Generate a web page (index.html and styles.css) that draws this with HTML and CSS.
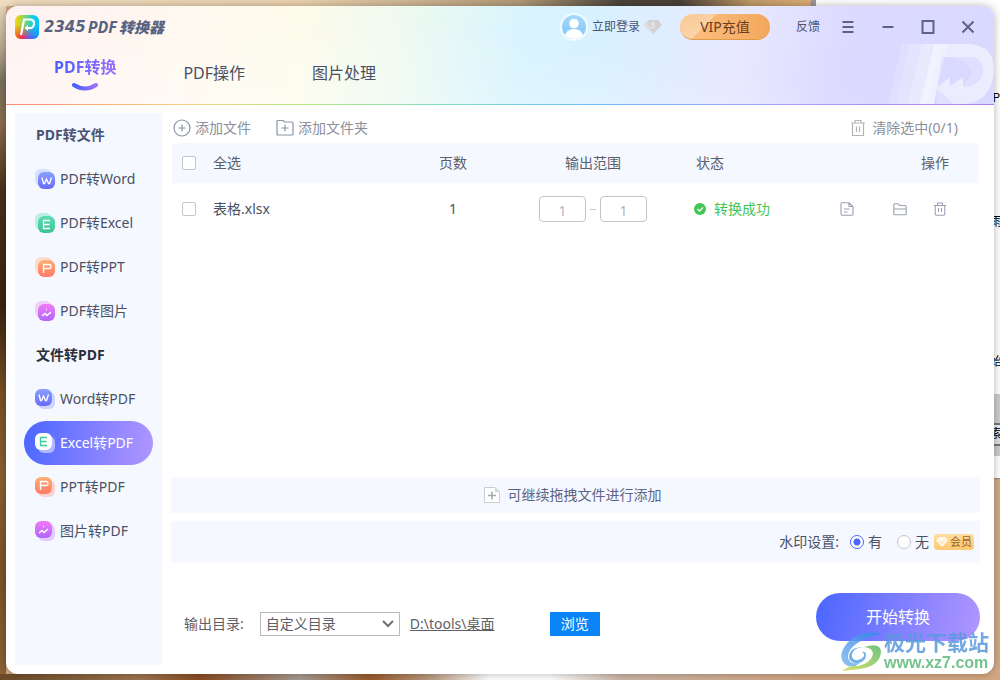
FILE: index.html
```html
<!DOCTYPE html>
<html lang="zh-CN">
<head>
<meta charset="utf-8">
<title>2345PDF转换器</title>
<link rel="stylesheet" href="styles.css">
</head>
<body>
<svg class="defs" width="0" height="0" aria-hidden="true">
  <defs>
    <linearGradient id="g-w" x1="0" y1="0" x2="0" y2="1"><stop offset="0" stop-color="#8aa0ff"/><stop offset="1" stop-color="#6a6cf8"/></linearGradient>
    <linearGradient id="g-e" x1="0" y1="0" x2="0" y2="1"><stop offset="0" stop-color="#5cdcb4"/><stop offset="1" stop-color="#3cc493"/></linearGradient>
    <linearGradient id="g-p" x1="0" y1="0" x2="0" y2="1"><stop offset="0" stop-color="#ffae75"/><stop offset="1" stop-color="#ff7a68"/></linearGradient>
    <linearGradient id="g-i" x1="0" y1="0" x2="0" y2="1"><stop offset="0" stop-color="#f07cf5"/><stop offset="1" stop-color="#b264fb"/></linearGradient>
    <linearGradient id="g-brand" x1="0" y1="0" x2="1" y2="0"><stop offset="0" stop-color="#4460ff"/><stop offset="1" stop-color="#a070ff"/></linearGradient>
    <linearGradient id="g-sky" x1="0" y1="0" x2="0" y2="1"><stop offset="0" stop-color="#a5d8fb"/><stop offset="1" stop-color="#7fc4f7"/></linearGradient>
    <linearGradient id="g-blue" x1="1" y1="0" x2="0" y2="1"><stop offset="0" stop-color="#2f86ea"/><stop offset="1" stop-color="#7fb8ec"/></linearGradient>
    <linearGradient id="g-green" x1="1" y1="0" x2="0" y2="1"><stop offset="0" stop-color="#58b96a"/><stop offset="1" stop-color="#d3dc52"/></linearGradient>
    <symbol id="m-w" viewBox="0 0 17 17"><path d="M4 5.500l1.500 6h1L8.500 7l2 4.500h1l2-6"/></symbol>
    <symbol id="m-e" viewBox="0 0 17 17"><path d="M12 4.500H5.500v8H12M5.500 8.500H11.500"/></symbol>
    <symbol id="m-p" viewBox="0 0 17 17"><path d="M5.500 13V4.500H11.500Q13 4.500 13 6.500T11.500 8.500H5.500"/></symbol>
    <symbol id="m-i" viewBox="0 0 17 17"><path d="M4 12l3-2.500 2 2L13 8M8 5.500h1"/></symbol>
  </defs>
</svg>

<div class="desktop">
  <div class="backdrop" aria-hidden="true">
    <div class="doc">
      <div class="doc-tools"></div>
      <span class="frag frag-a">P</span>
      <span class="frag frag-b">雨</span>
      <span class="frag frag-c">始</span>
      <span class="frag frag-d">索</span>
    </div>
  </div>

  <div class="app">
    <header class="header">
      <svg class="mark" width="106" height="60" viewBox="0 0 106 60" aria-hidden="true">
        <path d="M14 0H44L32 60H0z" fill="#fff" opacity=".16"/>
        <path d="M22 0H52L38 60H8z" fill="#fff" opacity=".16"/>
        <path d="M34 0H60L46 60H20z" fill="#fff" opacity=".22"/>
        <path d="M60 13H82Q95 14 95 27Q93 43 80 43H74L84 30Q84 18 60 13z" fill="#fff" opacity=".2"/>
        <path fill-rule="evenodd" d="M46 0H82Q106 2 106 26Q104 58 76 60H66L48 44L62 33V42L75 33V43Q93 43 95 27Q94 13 82 13H54L46 60H32z" fill="#fff" opacity=".5"/>
        <path d="M48 44L66 60H50z" fill="#fff" opacity=".2"/>
      </svg>
      <div class="titlebar">
        <svg width="24" height="24" viewBox="0 0 24 24" aria-hidden="true">
          <defs>
            <linearGradient id="l1" x1="0" y1="0" x2="1" y2="0"><stop offset="0" stop-color="#ffd400"/><stop offset=".45" stop-color="#6cd67a"/><stop offset=".75" stop-color="#12cfe6"/><stop offset="1" stop-color="#00c4ff"/></linearGradient>
            <linearGradient id="l2" x1="0" y1="0" x2="1" y2="0"><stop offset="0" stop-color="#ff5a1a"/><stop offset=".3" stop-color="#f02c5c"/><stop offset=".6" stop-color="#6a58e8"/><stop offset="1" stop-color="#00a2ff"/></linearGradient>
            <linearGradient id="l3" x1="0" y1="0" x2="0" y2="1"><stop offset=".4" stop-color="#fff" stop-opacity="0"/><stop offset=".95" stop-color="#fff"/></linearGradient>
            <mask id="lm"><rect width="24" height="24" fill="url(#l3)"/></mask>
          </defs>
          <rect width="24" height="24" rx="6" fill="url(#l1)"/>
          <rect width="24" height="24" rx="6" fill="url(#l2)" mask="url(#lm)"/>
          <path d="M6 20L9 4.500H14.500Q19.500 4.500 19 9T14 13H12.500" fill="none" stroke="#fff" stroke-width="2.200"/>
          <path d="M13 10v6L9.500 13z" fill="#fff"/>
        </svg>
        <h1 class="brand"><span class="brand-num">2345</span><span class="brand-pdf">PDF</span><span class="brand-cn">转换器</span></h1>
        <button class="login" type="button">
          <svg width="28" height="28" viewBox="0 0 28 28" aria-hidden="true"><circle cx="14" cy="14" r="14" fill="#f2fbff"/><circle cx="14" cy="14" r="12" fill="url(#g-sky)"/><circle cx="14" cy="10.500" r="4.800" fill="#fff"/><path d="M5 22Q7 16 14 16T23 22Q19 26 14 26T5 22z" fill="#fff"/></svg>
          <span>立即登录</span>
          <svg width="18" height="14" viewBox="0 0 18 14" aria-hidden="true"><path d="M4 0H14L18 5L9 14L0 5z" fill="#d2d0d2"/><path d="M4 0L5 5L9 14L0 5z" fill="#dedcdc"/><path d="M11 3H8Q6.500 4 8 5H10Q11.500 6.500 10 7.500H7" fill="none" stroke="#eee"/></svg>
        </button>
        <button class="vip" type="button">VIP充值</button>
        <button class="feedback" type="button">反馈</button>
        <div class="window-buttons">
          <button type="button" aria-label="菜单"><svg width="14" height="14" viewBox="0 0 14 14"><path d="M1.500 2H12.500M1.500 7H12.500M1.500 12H12.500"/></svg></button>
          <button type="button" aria-label="最小化"><svg width="14" height="14" viewBox="0 0 14 14"><path d="M1.500 7H12.500"/></svg></button>
          <button type="button" aria-label="最大化"><svg width="14" height="14" viewBox="0 0 14 14"><path d="M1.500 1H12.500V13H1.500z"/></svg></button>
          <button type="button" aria-label="关闭"><svg width="14" height="14" viewBox="0 0 14 14"><path d="M1.500 1.500L12.500 12.500M12.500 1.500L1.500 12.500"/></svg></button>
        </div>
      </div>
      <nav class="tabs">
        <a class="tab tab-active" href="#convert"><span>PDF转换</span><svg width="26" height="8" viewBox="0 0 26 8" aria-hidden="true"><path d="M2 2Q13 9 24 2" fill="none" stroke="url(#g-brand)" stroke-width="4" stroke-linecap="round"/></svg></a>
        <a class="tab" href="#operate">PDF操作</a>
        <a class="tab" href="#image">图片处理</a>
      </nav>
    </header>

    <div class="body">
      <nav class="sidebar">
        <h2 class="group">PDF转文件</h2>
        <a class="item" href="#pdf-word"><svg class="ic" viewBox="0 0 20 20"><rect width="17" height="17" rx="6" fill="#d3dfff"/><rect x="3" y="3" width="17" height="17" rx="6" fill="url(#g-w)"/><use href="#m-w" x="3" y="3" width="17" height="17"/></svg>PDF转Word</a>
        <a class="item" href="#pdf-excel"><svg class="ic" viewBox="0 0 20 20"><rect width="17" height="17" rx="6" fill="#bdeee1"/><rect x="3" y="3" width="17" height="17" rx="6" fill="url(#g-e)"/><use href="#m-e" x="3" y="3" width="17" height="17"/></svg>PDF转Excel</a>
        <a class="item" href="#pdf-ppt"><svg class="ic" viewBox="0 0 20 20"><rect width="17" height="17" rx="6" fill="#fbdccf"/><rect x="3" y="3" width="17" height="17" rx="6" fill="url(#g-p)"/><use href="#m-p" x="3" y="3" width="17" height="17"/></svg>PDF转PPT</a>
        <a class="item" href="#pdf-image"><svg class="ic" viewBox="0 0 20 20"><rect width="17" height="17" rx="6" fill="#f1cffb"/><rect x="3" y="3" width="17" height="17" rx="6" fill="url(#g-i)"/><use href="#m-i" x="3" y="3" width="17" height="17"/></svg>PDF转图片</a>
        <h2 class="group group-current">文件转PDF</h2>
        <a class="item" href="#word-pdf"><svg class="ic" viewBox="0 0 20 20"><rect x="3" y="3" width="17" height="17" rx="6" fill="#cfd3ff"/><rect width="17" height="17" rx="6" fill="url(#g-w)"/><use href="#m-w" width="17" height="17"/></svg>Word转PDF</a>
        <a class="item item-active" href="#excel-pdf" aria-current="page"><svg class="ic" viewBox="0 0 20 20"><rect x="3" y="3" width="17" height="17" rx="6" fill="#fff" opacity=".5"/><rect width="17" height="17" rx="6" fill="#fff"/><use href="#m-e" width="17" height="17"/></svg>Excel转PDF</a>
        <a class="item" href="#ppt-pdf"><svg class="ic" viewBox="0 0 20 20"><rect x="3" y="3" width="17" height="17" rx="6" fill="#fad2cc"/><rect width="17" height="17" rx="6" fill="url(#g-p)"/><use href="#m-p" width="17" height="17"/></svg>PPT转PDF</a>
        <a class="item" href="#image-pdf"><svg class="ic" viewBox="0 0 20 20"><rect x="3" y="3" width="17" height="17" rx="6" fill="#e2cbfc"/><rect width="17" height="17" rx="6" fill="url(#g-i)"/><use href="#m-i" width="17" height="17"/></svg>图片转PDF</a>
      </nav>

      <main class="main">
        <div class="toolbar">
          <button class="tool" type="button"><svg width="18" height="18" viewBox="0 0 18 18"><circle cx="9" cy="9" r="8"/><path d="M5.500 9h7M9 5.500v7"/></svg>添加文件</button>
          <button class="tool" type="button"><svg width="18" height="18" viewBox="0 0 18 18"><path d="M1 2.500Q1 1.500 2 1.500H7L8.500 3H16Q17 3 17 4V15Q17 16 16 16H2Q1 16 1 15zM5.500 9h7M9 5.500v7"/></svg>添加文件夹</button>
          <button class="tool tool-clear" type="button"><svg width="16" height="18" viewBox="0 0 16 18"><path d="M1 4H15M5 4V1.500H11V4M2.500 4V16.500H13.500V4M6.500 7.500V13M9.500 7.500V13"/></svg>清除选中(0/1)</button>
        </div>

        <table class="files">
          <colgroup><col class="c-check"><col><col class="c-pages"><col class="c-range"><col class="c-status"><col class="c-ops"></colgroup>
          <thead>
            <tr><th><input id="all" class="tick" type="checkbox"></th><th class="left"><label for="all">全选</label></th><th>页数</th><th>输出范围</th><th class="status">状态</th><th class="ops-head">操作</th></tr>
          </thead>
          <tbody>
            <tr>
              <td><input id="f1" class="tick" type="checkbox"></td>
              <td class="left"><label for="f1">表格.xlsx</label></td>
              <td>1</td>
              <td><div class="range"><input type="text" value="1" aria-label="起始页"><span class="dash"></span><input type="text" value="1" aria-label="结束页"></div></td>
              <td class="status"><div class="done"><svg width="12" height="12" viewBox="0 0 12 12" aria-hidden="true"><circle cx="6" cy="6" r="6" fill="#41c653"/><path d="M3.500 6l2 2 3.500-3.500" fill="none" stroke="#fff" stroke-width="1.300"/></svg>转换成功</div></td>
              <td><div class="ops">
                <button type="button" aria-label="打开文件"><svg width="14" height="14" viewBox="0 0 14 14"><path d="M9 .8H2Q1 .8 1 2V12Q1 13.200 2 13.200H12Q13 13.200 13 12V4.500zM9 1V4.500H13M4 7h5.500M4 10h3.500"/></svg></button>
                <button type="button" aria-label="打开文件夹"><svg width="14" height="14" viewBox="0 0 14 14"><path d="M.8 3Q.8 1.800 2 1.800H5L6.500 3.500H12Q13.200 3.500 13.200 5V11.500Q13.200 12.800 12 12.800H2Q.8 12.800 .8 11.500zM1 7H13"/></svg></button>
                <button type="button" aria-label="删除"><svg width="14" height="14" viewBox="0 0 14 14"><path d="M1 3.500H13M4.500 3.500V1H9.500V3.500M2.200 3.500V12Q2.200 13.200 3.400 13.200H10.600Q11.800 13.200 11.800 12V3.500M5.500 6v4M8.500 6v4"/></svg></button>
              </div></td>
            </tr>
          </tbody>
        </table>

        <div class="dropbar">
          <svg width="16" height="16" viewBox="0 0 16 16" aria-hidden="true"><path d="M.5 .5H11L15.500 5V15.500H.5z" fill="#fff" stroke="#c9ccd2"/><path d="M11 .5V5H15.500z" fill="#d3d5d9"/><path d="M4 8.500H12M8 4.500V12.500" stroke="#a3a7b0" stroke-width="1.500"/></svg>
          可继续拖拽文件进行添加
        </div>

        <div class="watermark-bar" role="radiogroup" aria-labelledby="wm">
          <span id="wm">水印设置:</span>
          <label class="choice choice-yes"><input type="radio" name="wm" checked>有</label>
          <label class="choice"><input type="radio" name="wm">无</label>
          <span class="member"><svg width="12" height="10" viewBox="0 0 12 10" aria-hidden="true"><path d="M3 0H9L12 3.500L6 10L0 3.500z" fill="#fff8e6"/><path d="M3.500 3.500L6 6.500L8.500 3.500" fill="none" stroke="#fdd9a0"/></svg>会员</span>
        </div>

        <footer class="footer">
          <div class="output">
            <label for="dir">输出目录:</label>
            <div class="select-box"><select id="dir"><option>自定义目录</option></select><svg width="12" height="8" viewBox="0 0 12 8" aria-hidden="true"><path d="M1 1L6 6L11 1" fill="none" stroke="#707070" stroke-width="2"/></svg></div>
            <a class="path" href="#dir">D:\tools\桌面</a>
            <button class="browse" type="button">浏览</button>
          </div>
          <button class="start" type="button">开始转换</button>
        </footer>
      </main>
    </div>
  </div>

  <div class="stamp">
    <svg width="42" height="40" viewBox="0 0 42 40" aria-hidden="true">
      <path d="M42 1Q16-2 5 14Q-3 26 6 33Q13 37 20 31Q8 33 8 24Q9 10 42 1z" fill="url(#g-blue)"/>
      <path d="M24 15Q11 16 12 25Q14 30 21 27Q27 23 22 20Q26 19 26 23Q26 29 19 31Q10 32 9 25Q9 15 24 15z" fill="#5fa3e6"/>
      <path d="M24 15Q41 10 41 20Q40 34 20 37Q11 38 2 39Q10 33 18 34Q31 31 33 22Q33 16 24 15z" fill="url(#g-green)"/>
    </svg>
    <div class="stamp-text"><span class="stamp-name">极光下载站</span><span class="stamp-url">www.xz7.com</span></div>
  </div>
</div>
</body>
</html>
```

FILE: styles.css
```css
* { box-sizing: border-box; }

body {
  margin: 0;
  font: 14px/20px "Noto Sans", "Noto Sans CJK SC", sans-serif;
  color: #4a5064;
}

button, input, select { font: inherit; color: inherit; }
button { padding: 0; border: 0; background: none; cursor: pointer; }
a { color: inherit; text-decoration: none; }
h1, h2 { margin: 0; font-size: inherit; }
.defs { position: absolute; }

.desktop {
  position: relative;
  display: flex;
  min-height: 100vh;
  padding: 6px;
  background:
    linear-gradient(90deg, #f0dcc0 0%, #ecd3b0 30%, #b39a78 52%, #4c443c 62%, #4a4038 68%, #c09a68 75%, #dcae74 81%, transparent 81%) top / 100% 6px no-repeat,
    linear-gradient(90deg, #6b4a26, #9a7450 14%, #8a4c22 20%, #a59a90 30%, #9a5a2c 37%, #b89a80 43%, #fff 49%, #fff 55%, #cbb5a5 62%, #d0a583 80%, #d3a67f) bottom / 100% 6px no-repeat,
    linear-gradient(180deg, #f0dcc0 0%, #b8a890 7%, #7a7060 12%, #8b6c4c 18%, #4a3018 28%, #3a2412 45%, #7a5024 58%, #8a6030 70%, #7a5426 85%, #8a6238) left / 6px 100% no-repeat,
    #d2a987;
}

.backdrop { position: absolute; inset: 0; overflow: hidden; }
.doc {
  position: absolute;
  top: 0;
  right: 0;
  width: 188px;
  height: 478px;
  background: #fff;
  border-left: 4px solid #9a9a9a;
  box-shadow: 0 0 2px #555;
}
.doc-tools {
  position: absolute;
  right: 0;
  top: 394px;
  width: 40px;
  height: 62px;
  background: linear-gradient(#ccc 29px, #777 29px, #777 31px, #eee 31px, #ddd 50px, #777 50px, #777 52px, #ccc 52px);
}
.frag { position: absolute; right: -2px; font: 12px/14px "Noto Sans CJK SC", sans-serif; color: #000; }
.frag-a { top: 90px; right: 0; }
.frag-b { top: 214px; }
.frag-c { top: 354px; }
.frag-d { top: 426px; }

.app {
  position: relative;
  flex: 1;
  display: flex;
  flex-direction: column;
  background: #fff;
  border-radius: 12px;
  overflow: hidden;
  box-shadow: 0 0 8px rgba(0, 0, 0, .3);
}

.header {
  position: relative;
  height: 99px;
  border-bottom: 1px solid;
  border-image: linear-gradient(90deg, #ff8a70, #f8d080 18%, #b8e880 30%, #80dcc8 45%, #70b8f8 60%, #a89cf8 80%, #b080f0) 1;
  background:
    linear-gradient(10deg, rgba(255, 255, 255, .4), rgba(255, 255, 255, 0) 60%),
    linear-gradient(100deg, #ffefef 0%, #fff8ee 18%, #fdfbea 30%, #eefaf0 40%, #d8f4ff 52%, #d9f1ff 60%, #e8e8ff 74%, #dcdaff 84%, #d9d8ff 100%);
}
.mark { position: absolute; right: 0; bottom: 0; }

.titlebar { position: relative; display: flex; align-items: center; height: 42px; padding: 0 6px 0 9px; }
.brand {
  display: flex;
  align-items: center;
  margin: 0 auto 0 5px;
  font-style: italic;
  font-weight: 700;
  line-height: 20px;
  color: #59627f;
}
.brand-num { font-family: "DejaVu Sans", sans-serif; font-size: 15px; }
.brand-pdf { margin: 0 2px; font-size: 16px; }
.brand-cn { font-size: 15px; font-weight: 900; }

.login { display: flex; align-items: center; gap: 4px; margin-right: 18px; font-size: 12px; color: #4a5478; }
.vip {
  width: 90px;
  height: 26px;
  margin-right: 26px;
  border-radius: 13px;
  border-bottom: 1px solid #e09a48;
  background: linear-gradient(135deg, rgba(255, 255, 255, .1), rgba(255, 255, 255, .35) 32%, transparent 32%), linear-gradient(90deg, #fbc384, #f3a75c);
  color: #6b3d22;
}
.feedback { margin-right: 8px; font-size: 12px; color: #4a5478; }
.window-buttons { display: flex; }
.window-buttons button { display: grid; place-items: center; width: 40px; height: 28px; }
.window-buttons svg { fill: none; stroke: #5c6486; stroke-width: 2; }

.tabs { display: flex; gap: 67px; padding: 0 48px; font-size: 16px; line-height: 22px; position: relative; }
.tab { padding-top: 14px; }
.tab-active { display: flex; flex-direction: column; align-items: center; gap: 5px; padding-top: 8px; font-weight: 700; }
.tab-active span { background: linear-gradient(90deg, #4460ff, #9a6cff); background-clip: text; color: transparent; }

.body { flex: 1; display: flex; gap: 9px; padding: 8px 14px 9px 9px; }

.sidebar { width: 147px; padding: 0 9px; background: #f5f8ff; }
.group, .item { display: flex; align-items: center; height: 44px; }
.group { padding-left: 12px; font-weight: 700; color: #4a5374; }
.group-current { color: #2b2f3a; }
.item { gap: 5px; padding-left: 11px; border-radius: 22px; white-space: nowrap; }
.item-active { background: linear-gradient(100deg, #4a66ff, #b296ff); color: #fff; }
.ic { width: 20px; height: 20px; fill: none; stroke: #fff; stroke-width: 1.300; }
.ic rect { stroke: none; }
.item-active .ic { stroke: #3cca98; }

.main { flex: 1; display: flex; flex-direction: column; min-width: 0; }

.toolbar { display: flex; gap: 25px; height: 30px; padding: 0 22px 0 2px; color: #8b8f9c; }
.tool { display: flex; align-items: center; gap: 4px; height: 30px; }
.tool-clear { margin-left: auto; gap: 6px; }
.tool svg { fill: none; stroke: #8c92a8; stroke-width: 1.200; }
.tool-clear svg { stroke: #b4b4b8; }

.files { width: 100%; padding: 0 1px; table-layout: fixed; border-spacing: 0; text-align: center; }
.files th, .files td { padding: 0; font-weight: 400; }
.files th { height: 40px; background: #f5f8ff; color: #5a5e6a; }
.files td { height: 52px; }
.files .left { text-align: left; }
.c-check { width: 41px; }
.c-pages { width: 120px; }
.c-range { width: 160px; }
.c-status { width: 130px; }
.c-ops { width: 176px; }
.files th.status { padding-left: 23px; text-align: left; }
.files td.status { padding-left: 21px; }
.files .ops-head { padding-right: 30px; text-align: right; }

.tick {
  appearance: none;
  display: block;
  width: 14px;
  height: 14px;
  margin: 0 0 0 10px;
  border: 1px solid #c4c6cc;
  border-radius: 2px;
  background: #fff;
}
.tick:checked { background: #4a66ff; }

.range { display: flex; align-items: center; justify-content: center; gap: 4px; }
.range input { width: 47px; height: 26px; padding: 2px 0 0; border: 1px solid #c4c4c6; border-radius: 4px; background: #fff; text-align: center; color: #b4b4be; }
.dash { width: 6px; height: 1px; background: #c4c4c6; }
.done { display: flex; align-items: center; gap: 8px; color: #41c653; }
.ops { display: flex; justify-content: flex-end; padding-right: 32px; }
.ops button { display: flex; margin-left: 26px; }
.ops button:first-child { margin-right: 13px; }
.ops svg { fill: none; stroke: #9a9eb2; stroke-width: 1.100; }

.dropbar, .watermark-bar { display: flex; align-items: center; background: #f5f8ff; }
.dropbar { justify-content: center; gap: 8px; height: 36px; margin: auto 0 8px; padding-right: 6px; color: #5c6486; }
.watermark-bar { justify-content: flex-end; height: 42px; padding-right: 6px; }
.choice { display: flex; align-items: center; gap: 4px; margin-right: 5px; }
.choice-yes { margin: 0 15px 0 11px; }
.choice input { appearance: none; width: 14px; height: 14px; margin: 0; border: 1px solid #c4c6cc; border-radius: 50%; background: #fff; }
.choice input:checked { border-color: #4a66ff; background: radial-gradient(circle, #4a66ff 3px, #fff 4px); }
.member {
  display: flex;
  align-items: center;
  justify-content: center;
  gap: 2px;
  width: 40px;
  height: 16px;
  border-radius: 4px;
  background: linear-gradient(#ffdca0, #fcc873);
  font-size: 11px;
  line-height: 16px;
  color: #9a6420;
}

.footer { display: flex; align-items: flex-end; justify-content: space-between; padding: 30px 0 24px; }
.output { display: flex; align-items: center; padding: 0 0 5px 13px; color: #5f6066; }
.select-box { position: relative; margin: 0 10px 0 16px; }
.select-box select { appearance: none; display: block; width: 140px; height: 24px; padding: 0 24px 0 5px; border: 1px solid #b9b9b9; border-radius: 0; background: #fff; line-height: 20px; }
.select-box svg { position: absolute; right: 6px; top: 8px; pointer-events: none; }
.path { min-width: 140px; text-decoration: underline; }
.browse { width: 50px; height: 24px; background: #0a84f5; color: #fff; }
.start { width: 164px; height: 48px; border-radius: 24px; background: linear-gradient(105deg, #4a66ff, #b296ff); font-size: 16px; color: #fff; }

.stamp { position: absolute; right: 11px; bottom: 7px; display: flex; align-items: center; gap: 2px; opacity: .85; pointer-events: none; }
.stamp-text { display: flex; flex-direction: column; font-weight: 700; }
.stamp-name { font-size: 21px; line-height: 22px; color: #5a9bdc; }
.stamp-url { font: 700 16px/20px "Liberation Sans", sans-serif; color: #5cb878; }
```
